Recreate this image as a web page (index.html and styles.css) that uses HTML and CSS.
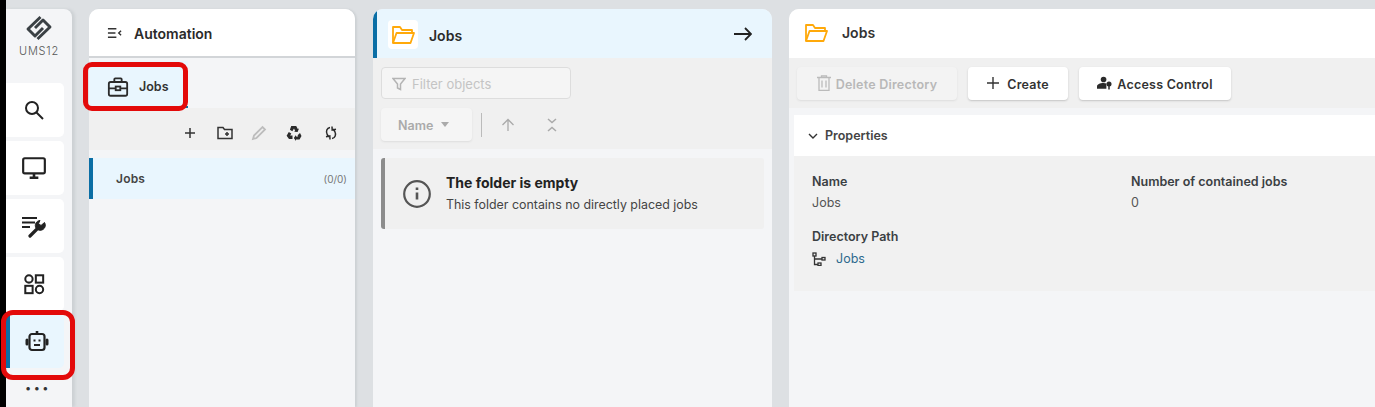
FILE: index.html
```html
<!DOCTYPE html>
<html lang="en">
<head>
<meta charset="utf-8">
<title>Automation - Jobs</title>
<link rel="stylesheet" href="styles.css">
</head>
<body>
<div class="app">
  <div class="edge"></div>
  <nav class="rail">
    <div class="logo">
      <svg class="logo-mark" viewBox="0 -1 28 26" width="28" height="26" fill="none" stroke="#3a4044" stroke-width="2.900" stroke-linejoin="round"><path d="M15.500 1 3 13l7 7 8-8"/><path d="M12.500 23 25 11l-7-7-8 8"/></svg>
      <span class="logo-text">UMS12</span>
    </div>
    <a class="rail-item"><svg viewBox="0 0 24 24" width="24" height="24" fill="none" stroke="#222" stroke-width="2"><circle cx="10" cy="10" r="6"/><path d="m14.500 14.500 6.500 6.500"/></svg></a>
    <a class="rail-item"><svg viewBox="0 0 24 24" width="26" height="26" fill="none" stroke="#222" stroke-width="2"><rect x="2" y="3" width="20" height="14" rx="1.500"/><path d="M12 17v3M8 21h8" stroke-width="2.400"/></svg></a>
    <a class="rail-item"><svg viewBox="0 0 24 24" width="24" height="24" fill="none" stroke="#222" stroke-width="2"><path d="M0 4h15M0 8.500h13M0 13h8"/><path d="M8 22l8.500-8.500" stroke-width="3.200" stroke-linecap="round"/><path d="M14 14a5 5 0 0 1 4-7.500l-1.500 3 2.500 2 3.500-3a5 5 0 0 1-8.500 5.500z" fill="#222" stroke-width="1"/></svg></a>
    <a class="rail-item"><svg viewBox="0 0 24 24" width="22" height="22" fill="none" stroke="#222" stroke-width="2.200"><circle cx="6.500" cy="6.500" r="4"/><rect x="14" y="2.500" width="8" height="8"/><rect x="2.500" y="14" width="8" height="8"/><circle cx="18" cy="18" r="4"/></svg></a>
    <a class="rail-item active"><svg viewBox="0 0 24 24" width="24" height="24" fill="none" stroke="#222" stroke-width="2.200"><rect x="4.500" y="5" width="15" height="16" rx="2.500"/><path d="M8.500 11.500h2M13.500 11.500h2M9 16h6"/><path d="M12 2v3" stroke-width="2.600"/><path d="M2 11v4M22 11v4" stroke-width="3" stroke-linecap="round"/></svg></a>
    <div class="more">&bull;&bull;&bull;</div>
  </nav>

  <section class="panel tree">
    <header class="tree-head">
      <svg viewBox="0 0 16 12" width="15" height="12" fill="none" stroke="#333" stroke-width="1.500"><path d="M1 1.500h9M1 6h8M1 10.500h9M15 3.500 12.500 6l2.500 2.500"/></svg>
      <h1 class="tree-title">Automation</h1>
    </header>
    <div class="tabs">
      <div class="tab">
        <svg viewBox="0 0 24 24" width="22" height="22" fill="none" stroke="#2b2b2b" stroke-width="2"><rect x="2" y="6.500" width="20" height="15" rx="2"/><path d="M8 6.500V3.500a1 1 0 0 1 1-1h6a1 1 0 0 1 1 1v3M2 13.500h7M15 13.500h7"/><rect x="9.500" y="11.500" width="5" height="4"/></svg>
        <span>Jobs</span>
      </div>
    </div>
    <div class="tree-tools">
      <svg viewBox="0 0 14 14" width="14" height="14" fill="none" stroke="#333" stroke-width="1.500"><path d="M7 2v10M2 7h10"/></svg>
      <svg class="new-folder" viewBox="0 0 16 14" width="16" height="14" fill="none" stroke="#333" stroke-width="1.500"><path d="M1 1.500h5l1.500 2H15v9H1z"/><path d="M8 8h4M10 6v4"/></svg>
      <svg viewBox="0 0 16 16" width="16" height="16" fill="none" stroke="#bdbdbd" stroke-width="1.800"><path d="M2 14l1-3.500 8.500-8.500 2.500 2.500L5.500 13z"/></svg>
      <svg class="recycle" viewBox="0 0 16 16" width="16" height="16" fill="#2b2b2b"><path d="M5.200 1h5l1.600 3 1.200-.6L11.600 7 8 6.800l1.200-.8L8 3.500 6.300 6.300 3.900 4.800zM2.800 7l2.500 1.500-.7 1.200-.5.900 2.400 0V14H3L.6 10.800zM14 8l1.500 3L13.500 14.500H10V16L7.800 13l2.200-3v1.500h2.200l-.6-1.300z"/></svg>
      <svg class="sync" viewBox="0 0 12 16" width="12" height="16" fill="none" stroke="#2b2b2b" stroke-width="1.500"><path d="M5 2.500C1.800 3 .6 6.500 2.200 9.500L3.800 12"/><path d="M1 11.800 4.800 11 5 14.500"/><path d="M7 13.500C10.200 13 11.400 9.500 9.800 6.500L8.200 4"/><path d="M11 4.200 7.200 5 7 1.500"/></svg>
    </div>
    <div class="tree-list">
      <div class="tree-row"><span class="tree-name">Jobs</span><span class="tree-count">(0/0)</span></div>
    </div>
  </section>

  <section class="panel list">
    <header class="list-head">
      <span class="tile">
        <svg class="folder" viewBox="0 0 24 20" width="24" height="20" fill="none" stroke="#ffa90a" stroke-width="1.800" stroke-linejoin="round"><path d="M2 18V2h7l2 3h10v3"/><path d="M2 18 5.500 8H23l-3.500 10z"/></svg>
      </span>
      <h2 class="list-title">Jobs</h2>
      <svg class="arrow" viewBox="0 0 18 14" width="18" height="14" fill="none" stroke="#222" stroke-width="1.800"><path d="M0 7h17M11 1l6 6-6 6"/></svg>
    </header>
    <div class="list-tools">
      <div class="filter">
        <svg viewBox="0 0 14 14" width="14" height="14" fill="none" stroke="#b4b4b4" stroke-width="1.500"><path d="M1 1.500h12L8.500 7v5.500l-3-1.500V7z"/></svg>
        <span>Filter objects</span>
      </div>
      <div class="sort">
        <div class="sort-btn"><span>Name</span><i class="caret"></i></div>
        <div class="divider"></div>
        <svg class="sort-up" viewBox="0 0 14 14" width="14" height="14" fill="none" stroke="#aaa" stroke-width="1.300"><path d="M7 13V1.500M1.500 7 7 1.500 12.500 7"/></svg>
        <svg class="sort-fold" viewBox="0 0 12 14" width="12" height="14" fill="none" stroke="#aaa" stroke-width="1.500"><path d="M2 1l4 3.500L10 1M2 13l4-3.500 4 3.500"/></svg>
      </div>
    </div>
    <div class="list-body">
      <div class="notice">
        <svg viewBox="0 0 28 28" width="28" height="28" fill="none" stroke="#555" stroke-width="2.200"><circle cx="14" cy="14" r="12.800"/><path d="M14 12.500v7" stroke-width="2.600"/><path d="M14 7.500v2.500" stroke-width="2.600"/></svg>
        <div class="notice-text">
          <strong>The folder is empty</strong>
          <span>This folder contains no directly placed jobs</span>
        </div>
      </div>
    </div>
  </section>

  <section class="panel detail">
    <header class="detail-head">
      <svg viewBox="0 0 24 20" width="24" height="20" fill="none" stroke="#ffa90a" stroke-width="1.800" stroke-linejoin="round"><path d="M2 18V2h7l2 3h10v3"/><path d="M2 18 5.500 8H23l-3.500 10z"/></svg>
      <h2 class="detail-title">Jobs</h2>
    </header>
    <div class="actions">
      <button class="btn delete"><svg viewBox="0 0 14 16" width="14" height="16" fill="none" stroke="#bbb" stroke-width="1.300"><path d="M0 2.500h14M4.500 2.500V.8h5v1.700M2 2.500v13h10v-13M5 5.500v7M9 5.500v7"/></svg><span>Delete Directory</span></button>
      <button class="btn create"><svg viewBox="0 0 12 12" width="12" height="12" fill="none" stroke="#333" stroke-width="1.400"><path d="M6 0v12M0 6h12"/></svg><span>Create</span></button>
      <button class="btn access"><svg viewBox="0 0 16 14" width="15" height="14" fill="#2b2b2b"><circle cx="7" cy="3.200" r="3"/><path d="M0 13v-2.500C0 8.500 3 7 7 7c1.200 0 2.300.2 3 .5V13z"/><circle cx="12.800" cy="8" r="2.700"/><path d="M12 9h1.600v5H12z"/></svg><span>Access Control</span></button>
    </div>
    <div class="props">
      <div class="props-head">
        <svg viewBox="0 0 10 6" width="10" height="6" fill="none" stroke="#333" stroke-width="1.400"><path d="M1 1l4 4 4-4"/></svg>
        <span>Properties</span>
      </div>
      <div class="props-body">
        <div class="prop"><div class="prop-label">Name</div><div class="prop-value">Jobs</div></div>
        <div class="prop"><div class="prop-label">Number of contained jobs</div><div class="prop-value">0</div></div>
        <div class="prop"><div class="prop-label">Directory Path</div><div class="prop-value link">
          <svg viewBox="0 0 14 14" width="14" height="14" fill="none" stroke="#333" stroke-width="1.300"><rect x="1" y="1" width="3" height="3"/><rect x="6" y="11" width="3" height="2.500"/><rect x="10" y="5.500" width="3" height="2.500"/><path d="M2.500 4v8.500H6M2.500 7H10"/></svg>
          <a>Jobs</a></div></div>
      </div>
    </div>
  </section>
</div>
<div class="mark mark-tab"></div>
<div class="mark mark-rail"></div>
</body>
</html>
```

FILE: styles.css
```css
* { box-sizing: border-box; }
html, body { margin: 0; height: 100%; }
body {
  position: relative;
  height: 407px;
  overflow: hidden;
  background: #dde0e3;
  font-family: Inter, "Liberation Sans", sans-serif;
  color: #222;
}
h1, h2 { margin: 0; }

.app { display: flex; height: 407px; }
.edge { width: 6px; background: #000; flex: none; }

.rail {
  width: 66px;
  flex: none;
  margin-top: 9px;
  background: #f4f5f7;
  border-top-right-radius: 8px;
  box-shadow: 3px 0 3px #cdd1d4;
  display: flex;
  flex-direction: column;
  gap: 4px;
}
.logo {
  height: 70px;
  padding-top: 6px;
  display: flex;
  flex-direction: column;
  align-items: center;
}
.logo-text {
  font-size: 11px;
  letter-spacing: .8px;
  color: #555;
  margin-top: 3px;
  font-weight: 300;
}
.rail-item {
  height: 54px;
  width: 58px;
  background: #fff;
  border-radius: 0 5px 5px 0;
  display: flex;
  align-items: center;
  justify-content: center;
  padding-right: 2px;
  flex: none;
}
.rail-item.active {
  margin-top: -1px;
  background: #e9f6fe;
  border-left: 4px solid #0a6ea5;
  padding-right: 0;
}
.more { text-align: center; font-size: 11px; letter-spacing: 2.500px; color: #333; line-height: 16px; margin-top: 8px; padding-right: 2px; }

.panel { margin-top: 9px; background: #f4f5f7; border-radius: 10px 10px 0 0; overflow: hidden; flex: none; display: flex; flex-direction: column; }

.tree { width: 266px; margin-left: 17px; box-shadow: 2px 0 2px #cdd1d4; }
.tree-head { height: 49px; flex: none; background: #fff; border-bottom: 2px solid #d2d5d8; display: flex; align-items: center; gap: 12px; padding: 1px 0 0 18px; }
.tree-title { font-size: 14px; font-weight: 600; color: #2a2a2a; }
.tabs { height: 50px; flex: none; padding-top: 3px; }
.tab { width: 99px; height: 47px; background: #e9f6fe; border-bottom: 2px solid #0a6ea5; display: flex; align-items: center; gap: 10px; padding: 6px 0 0 18px; font-size: 12.500px; font-weight: 600; color: #333; }
.tree-tools { height: 42px; flex: none; background: #f0f0f0; display: flex; align-items: center; justify-content: flex-end; gap: 19px; padding: 7px 18px 0 0; }
.new-folder { margin-right: -1px; margin-left: 1px; }
.recycle { margin-right: 1px; }
.sync { margin-left: 3px; }
.tree-list { padding-top: 8px; }
.tree-row { height: 41px; background: #e9f6fe; border-left: 4px solid #0a6ea5; display: flex; align-items: center; justify-content: space-between; padding: 0 8px 0 23px; }
.tree-name { font-size: 12px; font-weight: 600; color: #444; letter-spacing: .2px; }
.tree-count { font-size: 10px; color: #777; }

.list { width: 399px; margin-left: 18px; }
.list-head { height: 49px; flex: none; background: #e9f6fe; border-left: 4px solid #0a6ea5; display: flex; align-items: center; padding-left: 11px; padding-right: 20px; }
.tile { width: 30px; height: 29px; background: #fff; border-radius: 4px; display: flex; align-items: center; justify-content: center; flex: none; margin-top: 2px; }
.folder { width: 24px; }
.list-title { font-size: 14px; font-weight: 600; color: #2a2a2a; margin: 3px 0 0 11px; flex: 1; }
.list-tools { height: 91px; flex: none; background: #f0f0f0; padding: 9px 8px 0; }
.filter { width: 190px; height: 32px; background: #f5f5f5; border: 1px solid #ddd; border-radius: 4px; display: flex; align-items: center; gap: 6px; padding: 1px 0 0 10px; font-size: 13px; color: #c4c4c4; }
.sort { display: flex; align-items: center; margin-top: 9px; }
.sort-btn { width: 91px; height: 33px; background: #f5f5f5; border-radius: 4px; box-shadow: 0 1px 2px #ddd; display: flex; align-items: center; gap: 8px; padding: 2px 0 0 17px; font-size: 12.500px; font-weight: 600; color: #aaa; }
.caret { width: 0; height: 0; border-left: 4.500px solid transparent; border-right: 4.500px solid transparent; border-top: 5px solid #aaa; margin-top: -2px; }
.divider { width: 1px; height: 24px; background: #bbb; margin-left: 9px; }
.sort-up { margin-left: 19px; }
.sort-fold { margin-left: 31px; }
.list-body { padding: 9px 8px; }
.notice { height: 71px; background: #f0f0f0; border-left: 4px solid #8c8c8c; border-radius: 3px; display: flex; align-items: center; gap: 15px; padding-left: 18px; }
.notice-text { display: flex; flex-direction: column; gap: 6px; padding-bottom: 2px; }
.notice-text strong { font-size: 14px; font-weight: 700; color: #222; }
.notice-text span { font-size: 12.400px; color: #444; }

.detail { width: 586px; margin-left: 17px; border-radius: 10px 0 0 0; }
.detail-head { height: 49px; flex: none; background: #fff; display: flex; align-items: center; gap: 14px; padding: 0 0 2px 15px; }
.detail-title { font-size: 14px; font-weight: 600; color: #333; }
.actions { height: 50px; flex: none; background: #f0f0f0; display: flex; align-items: center; gap: 11px; padding: 0 0 0 8px; }
.btn { height: 33px; border: 0; border-radius: 4px; background: #fff; box-shadow: 0 1px 2px #c4c4c4; display: flex; align-items: center; justify-content: center; gap: 6px; font: 600 12.500px Inter, "Liberation Sans", sans-serif; color: #333; letter-spacing: .22px; padding: 0; }
.btn span { position: relative; top: 1px; }
.btn.delete { width: 160px; background: #f3f3f3; color: #b8b8b8; box-shadow: 0 1px 2px #ddd; gap: 5px; }
.btn.create { width: 100px; gap: 8px; }
.btn.access { width: 152px; gap: 5px; }
.props { margin: 7px 0 0 5px; }
.props-head { height: 41px; background: #fff; display: flex; align-items: center; gap: 7px; padding-left: 14px; font-size: 12.500px; font-weight: 600; color: #444; }
.props-body { height: 135px; background: #f1f1f1; display: grid; grid-template-columns: 319px 1fr; grid-template-rows: 55px auto; align-content: start; padding: 18px 0 0 18px; }
.prop-label { font-size: 12.500px; font-weight: 600; color: #3b4043; line-height: 15px; }
.prop-value { font-size: 12.500px; color: #555; margin-top: 6px; line-height: 16px; }
.prop-value.link { display: flex; align-items: center; gap: 10px; margin-top: 7px; }
.link a { color: #2e6a8e; }

.mark { position: absolute; border: 5px solid #e30a0a; pointer-events: none; }
.mark-tab { left: 83px; top: 62px; width: 105px; height: 49px; border-radius: 9px; }
.mark-rail { left: 1px; top: 310px; width: 74px; height: 70px; border-radius: 12px; }
```
